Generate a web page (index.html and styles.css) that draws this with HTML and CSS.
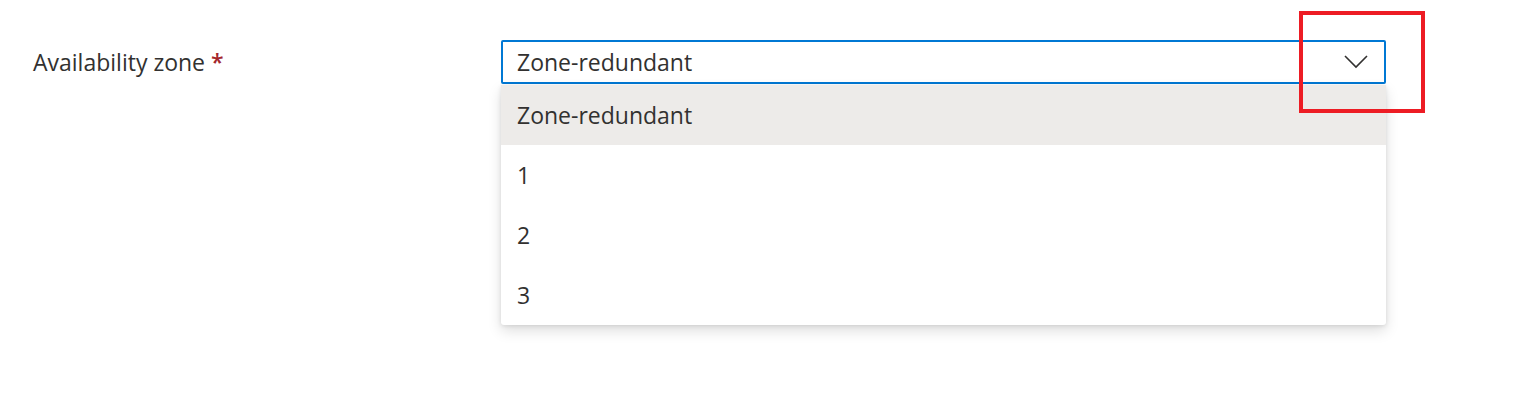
FILE: index.html
```html
<!DOCTYPE html>
<html lang="en">
<head>
<meta charset="utf-8">
<link rel="stylesheet" href="styles.css">
</head>
<body>
<div class="page">
  <div class="field-row">
    <div class="label">Availability zone <span class="req">*</span></div>
    <div class="dropdown-wrap">
      <div class="dropdown">
        <span class="dropdown-value">Zone-redundant</span>
        <svg class="chevron" width="24" height="14" viewBox="0 0 24 14" aria-hidden="true">
          <path d="M1 1 L12 12 L23 1" fill="none" stroke="#323130" stroke-width="1.6"/>
        </svg>
      </div>
      <ul class="callout">
        <li class="option selected">Zone-redundant</li>
        <li class="option">1</li>
        <li class="option">2</li>
        <li class="option">3</li>
      </ul>
    </div>
  </div>
  <div class="annotation"></div>
</div>
</body>
</html>
```

FILE: styles.css
```css
* { box-sizing: border-box; }
html, body {
  margin: 0;
  padding: 0;
  background: #ffffff;
}
body {
  font-family: "Open Sans", "Noto Sans", "Liberation Sans", sans-serif;
  font-size: 23px;
  color: #323130;
  width: 1526px;
  height: 414px;
  overflow: hidden;
}
.page {
  position: relative;
  width: 1526px;
  height: 414px;
}
.field-row {
  display: grid;
  grid-template-columns: 468px 885px;
  padding: 40px 0 0 33px;
  align-items: center;
}
.label {
  line-height: 44px;
  white-space: nowrap;
}
.req {
  color: #a4262c;
  font-weight: 600;
}
.dropdown-wrap {
  position: relative;
}
.dropdown {
  height: 44px;
  border: 2px solid #0078d4;
  border-radius: 2px;
  display: flex;
  align-items: center;
  justify-content: space-between;
  padding: 0 16px 0 14px;
  background: #fff;
}
.dropdown-value {
  line-height: 40px;
}
.chevron {
  display: block;
}
.callout {
  position: absolute;
  left: 0;
  top: 45px;
  width: 885px;
  margin: 0;
  padding: 0;
  list-style: none;
  background: #fff;
  border-radius: 0 0 3px 3px;
  box-shadow: 0 6px 14px rgba(0,0,0,0.13), 0 1px 4px rgba(0,0,0,0.10);
}
.option {
  height: 60px;
  display: flex;
  align-items: center;
  padding-left: 16px;
}
.option.selected {
  background: #edebe9;
}
.annotation {
  position: absolute;
  left: 1299px;
  top: 11px;
  width: 126px;
  height: 102px;
  border: 4px solid #ed1c24;
}
```
